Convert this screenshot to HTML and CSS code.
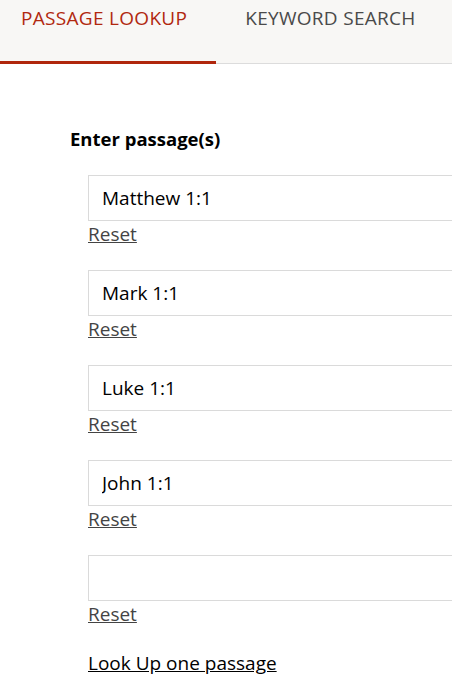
FILE: index.html
```html
<!DOCTYPE html>
<html lang="en">
<head>
    <meta charset="UTF-8">
    <meta name="viewport" content="width=device-width, initial-scale=1.0">
    <title>Passage Lookup</title>
    <link rel="stylesheet" href="styles.css">
</head>
<body>

    <!-- Tabs -->
    <nav class="tabs">
        <a href="#" class="tab active">PASSAGE LOOKUP</a>
        <a href="#" class="tab">KEYWORD SEARCH</a>
    </nav>

    <main class="lookup">
        <label class="lookup-label" for="p1">Enter passage(s)</label>

        <div class="passages">
            <div class="passage">
                <input type="text" id="p1" class="passage-input" value="Matthew 1:1">
                <a href="#" class="reset">Reset</a>
            </div>
            <div class="passage">
                <input type="text" class="passage-input" value="Mark 1:1">
                <a href="#" class="reset">Reset</a>
            </div>
            <div class="passage">
                <input type="text" class="passage-input" value="Luke 1:1">
                <a href="#" class="reset">Reset</a>
            </div>
            <div class="passage">
                <input type="text" class="passage-input" value="John 1:1">
                <a href="#" class="reset">Reset</a>
            </div>
            <div class="passage">
                <input type="text" class="passage-input" value="">
                <a href="#" class="reset">Reset</a>
            </div>

            <a href="#" class="one-passage">Look Up one passage</a>
        </div>
    </main>

</body>
</html>
```

FILE: styles.css
```css
/* General */
* { margin: 0; padding: 0; box-sizing: border-box; }
body {
    font-family: "Open Sans", "Noto Sans", Arial, sans-serif;
    background: #fff;
    color: #000;
    overflow: hidden;
}

/* Tabs */
.tabs {
    display: flex;
    gap: 8px;
    height: 64px;
    background: #f8f7f5;
    border-bottom: 1px solid #dcdcdc;
}

.tab {
    display: block;
    padding: 5px 29px 0 21px;
    font-size: 19px;
    letter-spacing: 0.3px;
    color: #4a4a4a;
    text-decoration: none;
    border-bottom: 3px solid transparent;
    margin-bottom: -1px;
}

.tab.active {
    color: #b1280f;
    border-bottom-color: #b0260c;
}

/* Lookup form */
.lookup {
    padding: 62px 0 0 70px;
}

.lookup-label {
    display: block;
    font-size: 18.5px;
    font-weight: bold;
}

.passages {
    padding: 24px 0 0 18px;
}

.passage {
    margin-bottom: 23px;
}

.passage-input {
    display: block;
    width: 420px;
    height: 46px;
    padding: 0 13px;
    border: 1px solid #dadada;
    font-family: inherit;
    font-size: 19px;
    color: #000;
    outline: none;
}

.reset {
    font-size: 19px;
    color: #444;
}

.one-passage {
    display: inline-block;
    font-size: 19px;
    color: #000;
}
```
